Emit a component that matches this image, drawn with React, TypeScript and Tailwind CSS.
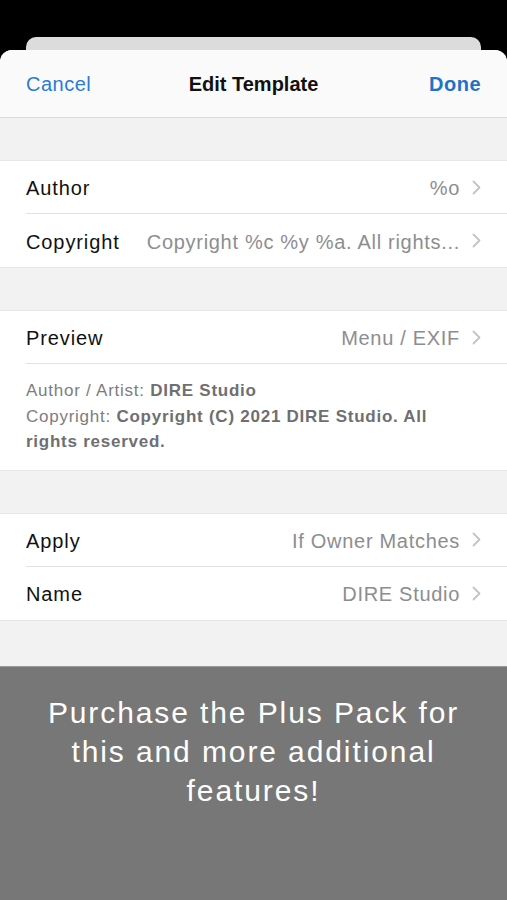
import { ReactNode } from "react";

function Chevron() {
  return (
    <svg width="9" height="15" viewBox="0 0 9 15" className="shrink-0">
      <path d="M1.5 1.5 L7.5 7.5 L1.5 13.5" fill="none" stroke="#c4c4c7" strokeWidth="1.8" strokeLinecap="round" strokeLinejoin="round" />
    </svg>
  );
}

function Row({ label, value, divider = false }: { label: string; value: string; divider?: boolean }) {
  return (
    <div className="pl-[26px]">
      <div className={`flex items-center h-[53px] pr-[26px] gap-4 ${divider ? "border-b border-[#e2e2e4]" : ""}`}>
        <span className="pt-[2px] text-[20px] tracking-[0.9px] text-[#111] shrink-0">{label}</span>
        <span className="pt-[2px] flex-1 min-w-0 text-right whitespace-nowrap text-[20px] tracking-[0.7px] text-[#8d8d91]">{value}</span>
        <span className="ml-[-4px]">
          <Chevron />
        </span>
      </div>
    </div>
  );
}

function Section({ children }: { children: ReactNode }) {
  return <div className="bg-white border-y border-[#e6e6e8]">{children}</div>;
}

export default function App() {
  return (
    <div className="w-[507px] h-[900px] bg-black overflow-hidden flex flex-col" style={{ fontFamily: '"Liberation Sans", Arial, sans-serif' }}>
      <div className="pt-[37px] px-[26px]">
        <div className="h-[13px] bg-[#dcdcdc] rounded-t-[10px]" />
      </div>
      <div className="flex-1 flex flex-col bg-[#f2f2f2] rounded-t-[12px] overflow-hidden">
        <div className="h-[68px] bg-[#fafafa] border-b border-[#dadada] grid grid-cols-[1fr_auto_1fr] items-center px-[26px]">
          <span className="text-[20px] tracking-[0.5px] text-[#2c7bd2]">Cancel</span>
          <span className="text-[20px] font-semibold text-[#111]">Edit Template</span>
          <span className="text-right text-[20px] font-bold tracking-[0.5px] text-[#1f72cc]">Done</span>
        </div>

        <div className="h-[42px]" />
        <Section>
          <Row label="Author" value="%o" divider />
          <Row label="Copyright" value="Copyright %c %y %a. All rights..." />
        </Section>

        <div className="h-[42px]" />
        <Section>
          <Row label="Preview" value="Menu / EXIF" divider />
          <div className="px-[26px] pt-[14px] pb-[15px] text-[17px] leading-[25.5px] tracking-[0.75px] text-[#7d7d80]">
            <div>
              Author / Artist: <span className="font-bold text-[#6f6f72]">DIRE Studio</span>
            </div>
            <div>
              Copyright: <span className="font-bold text-[#6f6f72]">Copyright (C) 2021 DIRE Studio. All</span>
              <br />
              <span className="font-bold text-[#6f6f72]">rights reserved.</span>
            </div>
          </div>
        </Section>

        <div className="h-[42px]" />
        <Section>
          <Row label="Apply" value="If Owner Matches" divider />
          <Row label="Name" value="DIRE Studio" />
        </Section>

        <div className="h-[45px]" />
        <div className="flex-1 bg-[#777777] border-t border-[#9a9a9a] flex justify-center pt-[26px]">
          <p className="text-white text-[30px] leading-[39px] tracking-[1.9px] text-center w-[440px]">
            Purchase the Plus Pack for this and more additional features!
          </p>
        </div>
      </div>
    </div>
  );
}
